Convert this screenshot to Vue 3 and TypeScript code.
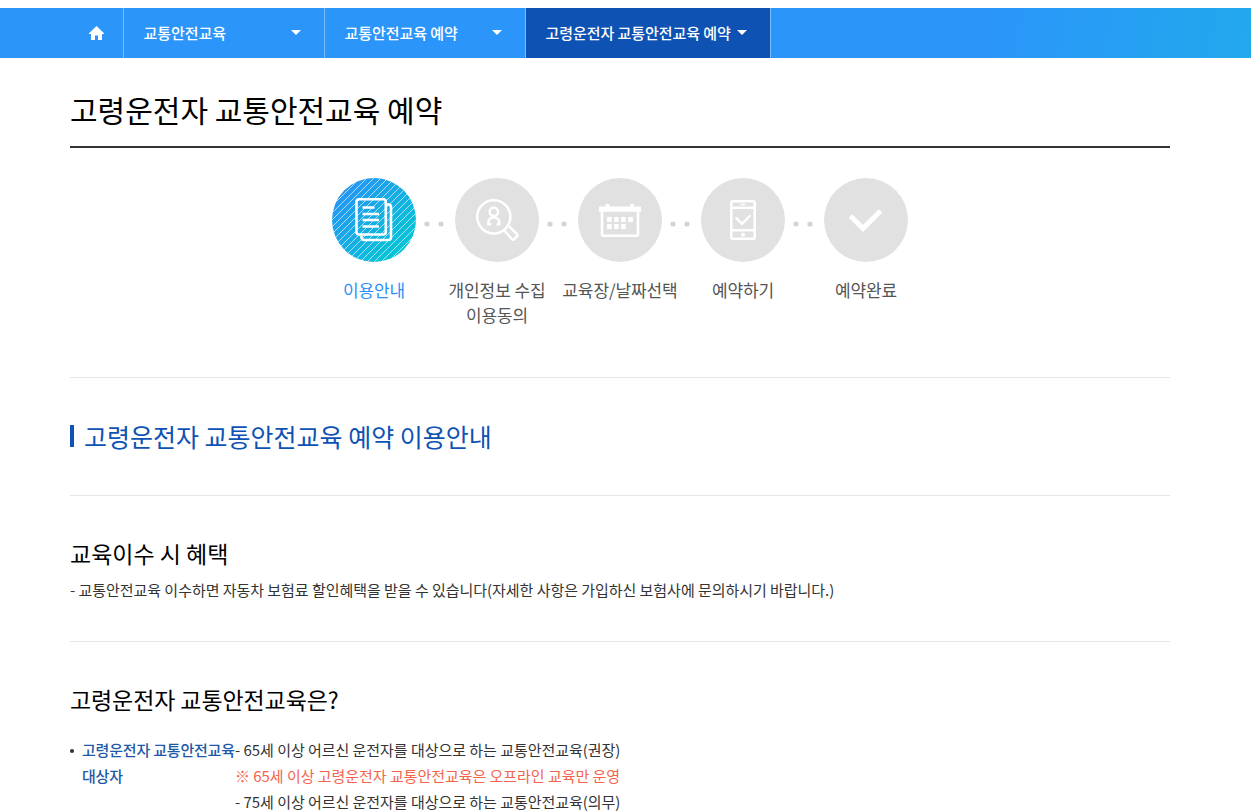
<script setup lang="ts">
interface Crumb {
  label: string
  active?: boolean
}

interface Step {
  icon: 'guide' | 'consent' | 'calendar' | 'phone' | 'done'
  lines: string[]
}

const crumbs: Crumb[] = [
  { label: '교통안전교육' },
  { label: '교통안전교육 예약' },
  { label: '고령운전자 교통안전교육 예약', active: true },
]

const steps: Step[] = [
  { icon: 'guide', lines: ['이용안내'] },
  { icon: 'consent', lines: ['개인정보 수집', '이용동의'] },
  { icon: 'calendar', lines: ['교육장/날짜선택'] },
  { icon: 'phone', lines: ['예약하기'] },
  { icon: 'done', lines: ['예약완료'] },
]
</script>

<template>
  <div class="page">
    <nav class="crumbs">
      <a class="home">
        <svg width="15" height="14" viewBox="0 0 15 14"><path d="M7.5 0L15 7.2V8h-2v6H9V9.500H6V14H2V8H0v-.8z" fill="#fff" /></svg>
      </a>
      <a v-for="c in crumbs" :key="c.label" class="crumb" :class="{ active: c.active }">
        <span>{{ c.label }}</span>
        <svg width="10" height="5" viewBox="0 0 10 5"><path d="M0 0h10L5 5z" fill="#fff" /></svg>
      </a>
    </nav>

    <main class="content">
      <h1>고령운전자 교통안전교육 예약</h1>

      <ol class="steps">
        <li v-for="(s, i) in steps" :key="s.icon" class="step" :class="{ current: i === 0 }">
          <svg class="disc" width="84" height="84" viewBox="0 0 84 84" fill="none">
            <template v-if="s.icon === 'guide'">
              <defs>
                <linearGradient id="disc-fill" x1="0.15" y1="0.15" x2="0.85" y2="0.85">
                  <stop offset="0" stop-color="#2597f3" />
                  <stop offset="1" stop-color="#06c5d5" />
                </linearGradient>
                <pattern id="disc-lines" width="7" height="7" patternUnits="userSpaceOnUse">
                  <path d="M-1 8L8 -1M-1 1L1 -1M6 8L8 6" stroke="#fff" stroke-width=".8" stroke-opacity=".8" />
                </pattern>
              </defs>
              <circle cx="42" cy="42" r="42" fill="url(#disc-fill)" />
              <circle cx="42" cy="42" r="42" fill="url(#disc-lines)" />
              <g stroke="#fff" stroke-width="2.600">
                <rect x="24.500" y="21.300" width="29.300" height="35.200" rx="2.500" />
                <path d="M54.500 26.500h2a2.500 2.500 0 0 1 2.500 2.500v30.500a2.500 2.500 0 0 1-2.500 2.500H32a2.500 2.500 0 0 1-2.500-2.500V57.500" />
                <path d="M30.500 29.500h12M30.500 36h16.500M30.500 42h16.500M30.500 48.500h16.500" />
              </g>
            </template>
            <template v-else>
              <circle cx="42" cy="42" r="42" fill="#e1e1e1" />
              <g v-if="s.icon === 'consent'" stroke="#fff" stroke-width="2.500" stroke-linejoin="round">
                <circle cx="38.800" cy="38.800" r="16.600" />
                <circle cx="38.800" cy="33.800" r="4.200" />
                <path d="M36 46.200h-2.700V44.500a5.500 5 0 0 1 11 0v1.700h-2.700" />
                <path d="M49.300 52.500l7.300 8.300q1.500 1.500 3 0l2.200-2.200q1.300-1.300 0-2.700l-7.600-7.600" />
              </g>
              <g v-else-if="s.icon === 'calendar'">
                <path d="M21 28.500h6.700V26h3.600v2.500h21V26H56v2.500h7v5.200H21z" fill="#fff" />
                <path d="M24 33v23.200a1.500 1.500 0 0 0 1.500 1.500h33a1.500 1.500 0 0 0 1.500-1.500V33" stroke="#fff" stroke-width="2.600" />
                <path d="M29 39h4.700v5H29zM36 39h4.700v5H36zM43 39h4.700v5H43zM50.300 39H55v5h-4.700zM29 46h4.700v5H29zM36 46h4.700v5H36zM43 46h4.700v5H43z" fill="#fff" />
              </g>
              <g v-else-if="s.icon === 'phone'">
                <rect x="30.300" y="23.300" width="23.400" height="37.400" rx="1.800" stroke="#fff" stroke-width="2.600" />
                <path d="M30 29.800h24M30 52.200h24" stroke="#fff" stroke-width="2.400" />
                <path d="M39.500 26.500h5" stroke="#fff" stroke-width="1.400" />
                <circle cx="42" cy="56.700" r="1.900" fill="#fff" />
                <path d="M34.700 39.500l6.300 6.300 8.500-8.500" stroke="#fff" stroke-width="2.300" />
              </g>
              <path v-else d="M26.500 38L39 50.500 56.500 33" stroke="#fff" stroke-width="5" />
            </template>
          </svg>
          <span class="label"><span v-for="line in s.lines" :key="line">{{ line }}</span></span>
          <svg v-if="i < steps.length - 1" class="dots" width="20" height="6" viewBox="0 0 20 6">
            <circle cx="3" cy="3" r="2.600" fill="#d4d4d4" /><circle cx="17" cy="3" r="2.600" fill="#d4d4d4" />
          </svg>
        </li>
      </ol>

      <h2><span>고령운전자 교통안전교육 예약 이용안내</span></h2>

      <section class="benefit">
        <h3>교육이수 시 혜택</h3>
        <p>- 교통안전교육 이수하면 자동차 보험료 할인혜택을 받을 수 있습니다(자세한 사항은 가입하신 보험사에 문의하시기 바랍니다.)</p>
      </section>

      <section class="about">
        <h3>고령운전자 교통안전교육은?</h3>
        <dl>
          <dt>고령운전자 교통안전교육<br />대상자</dt>
          <dd>
            <p>- 65세 이상 어르신 운전자를 대상으로 하는 교통안전교육(권장)</p>
            <p class="notice">※ 65세 이상 고령운전자 교통안전교육은 오프라인 교육만 운영</p>
            <p>- 75세 이상 어르신 운전자를 대상으로 하는 교통안전교육(의무)</p>
          </dd>
        </dl>
      </section>
    </main>
  </div>
</template>

<style>
html,
body {
  margin: 0;
  overflow: hidden;
}
</style>

<style scoped>
.page {
  box-sizing: border-box;
  height: 812px;
  padding-top: 8px;
  overflow: hidden;
  background: #fff;
  color: #333;
  font: 15px/26px 'Noto Sans CJK KR', 'Noto Sans', sans-serif;
}
h1, h2, h3, p, ol, dl, dd { margin: 0; padding: 0; }
svg { display: block; flex: none; }
.crumbs {
  display: flex;
  height: 50px;
  padding-left: 70px;
  background: linear-gradient(100deg, #2b95fa 0, #2b95fa 78%, #22a9ec 100%);
  color: #fff;
  font-weight: 500;
}
.home {
  display: flex;
  align-items: center;
  box-sizing: border-box;
  width: 54px;
  padding-left: 19px;
  border-right: 1px solid #7bbcfc;
}
.crumb {
  display: flex;
  align-items: center;
  justify-content: space-between;
  box-sizing: border-box;
  width: 201px;
  padding: 0 23px 0 19.500px;
  border-right: 1px solid #7bbcfc;
  letter-spacing: -0.06px;
  white-space: nowrap;
}
.crumb svg { margin-bottom: 2px; }
.crumb.active { width: 245px; background: #0e53b3; }
.content { width: 1100px; margin-left: 70px; }
h1 {
  box-sizing: border-box;
  height: 90px;
  padding-top: 29px;
  border-bottom: 2px solid #333;
  color: #000;
  font-size: 30px;
  font-weight: 400;
  line-height: 44px;
}
.steps {
  display: flex;
  justify-content: center;
  box-sizing: border-box;
  height: 230px;
  padding-top: 30px;
  border-bottom: 1px solid #e5e5e5;
  list-style: none;
}
.step {
  position: relative;
  display: flex;
  flex-direction: column;
  align-items: center;
  width: 123px;
}
.dots { position: absolute; top: 43px; left: 111.500px; }
.label {
  display: flex;
  flex-direction: column;
  align-items: center;
  margin-top: 15px;
  color: #555;
  font-size: 17px;
  letter-spacing: -0.1px;
  line-height: 25px;
  white-space: nowrap;
}
.current .label { color: #2b91f8; }
h2 {
  display: flex;
  align-items: center;
  box-sizing: border-box;
  height: 118px;
  padding-bottom: 2px;
  border-bottom: 1px solid #e5e5e5;
  color: #0e53b3;
  font-size: 25px;
  font-weight: 400;
}
h2::before {
  width: 4px;
  height: 22px;
  margin-right: 10px;
  background: #0e53b3;
  content: '';
}
h3 { color: #000; font-size: 23px; font-weight: 400; line-height: 34px; }
.benefit {
  box-sizing: border-box;
  height: 146px;
  padding-top: 40px;
  border-bottom: 1px solid #e5e5e5;
}
.benefit p { margin-top: 7px; }
.about { padding-top: 40px; }
.about h3 { letter-spacing: -0.1px; }
dl { display: flex; margin-top: 21px; }
dt {
  position: relative;
  box-sizing: border-box;
  width: 165px;
  padding-left: 12px;
  color: #1e58a8;
  font-weight: 500;
  letter-spacing: -0.2px;
  white-space: nowrap;
}
dt::before {
  position: absolute;
  top: 12px;
  left: 0;
  width: 4px;
  height: 4px;
  border-radius: 50%;
  background: #333;
  content: '';
}
p { letter-spacing: -0.04px; white-space: nowrap; }
.notice { color: #f2654c; }
</style>
